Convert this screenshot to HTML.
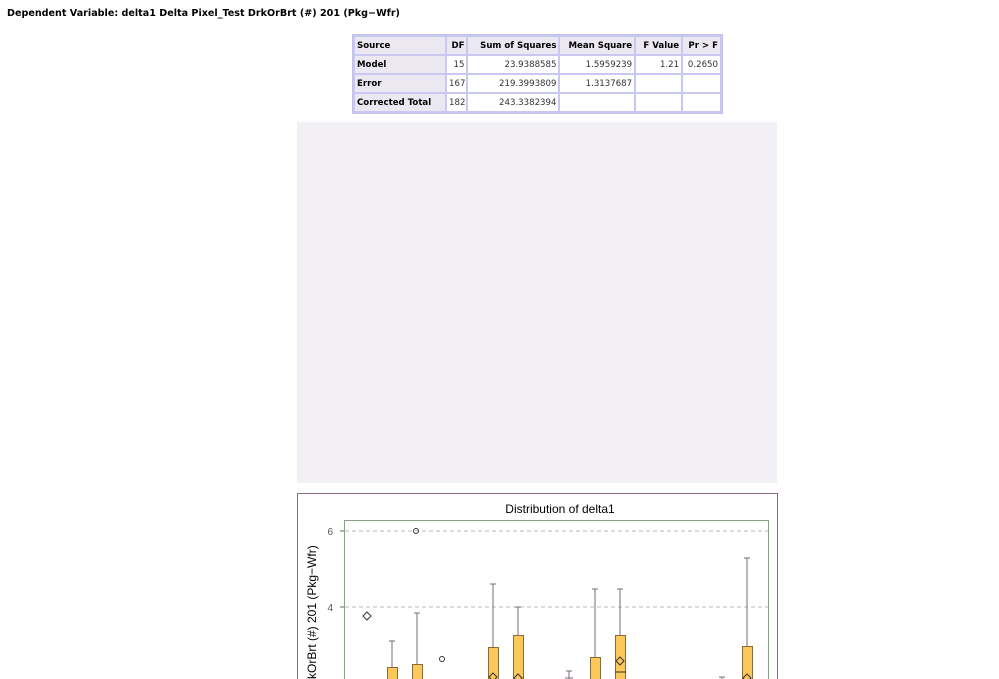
<!DOCTYPE html>
<html><head><style>
body{margin:0;width:999px;height:679px;overflow:hidden;background:#fff;font-family:Verdana,"DejaVu Sans",sans-serif;position:relative}
.h{position:absolute;left:7px;top:8px;font-size:9.6px;font-weight:bold;color:#000}
table{position:absolute;left:352px;top:34px;border-collapse:separate;border-spacing:2px;background:#c8c8f0;border:1px solid #c0c0e8;font-size:8.6px;table-layout:fixed;width:371px}
td,th{background:#fff;padding:0 2px;height:17px;color:#333;text-align:right;white-space:nowrap;overflow:hidden}
th{background:#ece8f2;color:#000;font-weight:bold}
th.l{text-align:left}
.noise{position:absolute;left:297px;top:122px;width:480px;height:361px;background:#f3f0f5}
</style></head><body>
<div class="h">Dependent Variable: delta1 Delta Pixel_Test DrkOrBrt (#) 201 (Pkg−Wfr)</div>
<table>
<colgroup><col style="width:88px"><col style="width:19px"><col style="width:88px"><col style="width:72px"><col style="width:44px"><col style="width:36px"></colgroup>
<tr><th class="l">Source</th><th>DF</th><th>Sum of Squares</th><th>Mean Square</th><th>F Value</th><th>Pr &gt; F</th></tr>
<tr><th class="l">Model</th><td>15</td><td>23.9388585</td><td>1.5959239</td><td>1.21</td><td>0.2650</td></tr>
<tr><th class="l">Error</th><td>167</td><td>219.3993809</td><td>1.3137687</td><td></td><td></td></tr>
<tr><th class="l">Corrected Total</th><td>182</td><td>243.3382394</td><td></td><td></td><td></td></tr>
</table>
<div class="noise"></div>
<svg style="position:absolute;left:0;top:0" width="999" height="679">
<rect x="297.5" y="493.5" width="480" height="200" fill="#fff" stroke="#8a6a8a"/>
<text x="560" y="513" font-family="Liberation Sans,sans-serif" font-size="12" text-anchor="middle">Distribution of delta1</text>
<rect x="344.5" y="520.5" width="424" height="170" fill="#fff" stroke="#8aa08a"/>
<line x1="345" y1="531" x2="768" y2="531" stroke="#bbb" stroke-dasharray="4,3"/>
<line x1="345" y1="607" x2="768" y2="607" stroke="#bbb" stroke-dasharray="4,3"/>
<line x1="340" y1="531" x2="344" y2="531" stroke="#666"/><line x1="340" y1="607" x2="344" y2="607" stroke="#666"/>
<text x="333" y="535" font-family="Liberation Sans,sans-serif" font-size="10" fill="#555" text-anchor="end">6</text>
<text x="333" y="611" font-family="Liberation Sans,sans-serif" font-size="10" fill="#555" text-anchor="end">4</text>
<text transform="translate(316,679) rotate(-90)" font-family="Liberation Sans,sans-serif" font-size="12">kOrBrt (#) 201 (Pkg−Wfr)</text>
<g stroke="#7a6a7a" fill="none">
<path d="M392 641V667M389 641h6M417 613V664M414 613h6M493 584V647M490 584h6M518 607V635M515 607h6M569 671V679M566 671h6M565 678h8M595 589V657M592 589h6M620 589V635M617 589h6M722 677V679M719 677h6M747 558V646M744 558h6"/>
</g>
<g fill="#fcc85a" stroke="#8a6a3a">
<rect x="387.5" y="667.5" width="10" height="20"/><rect x="412.5" y="664.5" width="10" height="20"/>
<rect x="488.5" y="647.5" width="10" height="40"/><rect x="513.5" y="635.5" width="10" height="50"/>
<rect x="590.5" y="657.5" width="10" height="30"/><rect x="615.5" y="635.5" width="10" height="50"/>
<rect x="742.5" y="646.5" width="10" height="40"/>
</g>
<line x1="615" y1="672" x2="626" y2="672" stroke="#333"/>
<g fill="none" stroke="#333">
<circle cx="416" cy="531" r="2.5"/><circle cx="442" cy="659" r="2.5"/>
<path d="M367 612l4 4-4 4-4-4z"/><path d="M620 657l4 4-4 4-4-4z"/><path d="M493 673l4 4-4 4-4-4z"/><path d="M518 674l4 4-4 4-4-4z"/><path d="M747 674l4 4-4 4-4-4z"/>
</g>
</svg>
</body></html>
